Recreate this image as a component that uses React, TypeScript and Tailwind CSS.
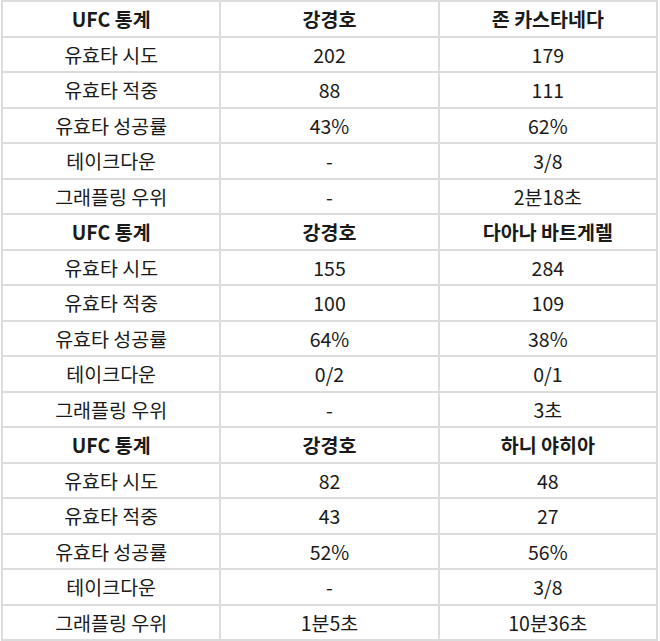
import { Fragment } from 'react';

const sections = [
  {
    opponent: '존 카스타네다',
    rows: [
      ['유효타 시도', '202', '179'],
      ['유효타 적중', '88', '111'],
      ['유효타 성공률', '43%', '62%'],
      ['테이크다운', '-', '3/8'],
      ['그래플링 우위', '-', '2분18초'],
    ],
  },
  {
    opponent: '다아나 바트게렐',
    rows: [
      ['유효타 시도', '155', '284'],
      ['유효타 적중', '100', '109'],
      ['유효타 성공률', '64%', '38%'],
      ['테이크다운', '0/2', '0/1'],
      ['그래플링 우위', '-', '3초'],
    ],
  },
  {
    opponent: '하니 야히아',
    rows: [
      ['유효타 시도', '82', '48'],
      ['유효타 적중', '43', '27'],
      ['유효타 성공률', '52%', '56%'],
      ['테이크다운', '-', '3/8'],
      ['그래플링 우위', '1분5초', '10분36초'],
    ],
  },
];

const cell = 'border-2 border-[#dcdcdc] text-center align-middle p-0';

export default function App() {
  return (
    <div className="h-[641px] w-[660px] bg-white pl-px">
      <table
        className="h-[640px] w-[657px] table-fixed border-collapse text-[19.5px] text-[#1a1a1a]"
        style={{ fontFamily: '"Noto Sans CJK KR", "Noto Sans", sans-serif' }}
      >
        <tbody>
          {sections.map((section) => (
            <Fragment key={section.opponent}>
              <tr className="h-[35.5px] font-semibold">
                <td className={cell}>UFC 통계</td>
                <td className={cell}>강경호</td>
                <td className={cell}>{section.opponent}</td>
              </tr>
              {section.rows.map((row) => (
                <tr key={row[0]} className="h-[35.5px]">
                  {row.map((value, i) => (
                    <td key={i} className={cell}>
                      {value}
                    </td>
                  ))}
                </tr>
              ))}
            </Fragment>
          ))}
        </tbody>
      </table>
    </div>
  );
}
